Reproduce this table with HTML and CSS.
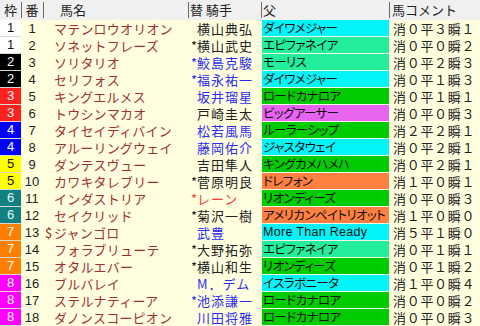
FILE: index.html
```html
<!DOCTYPE html>
<html lang="ja">
<head>
<meta charset="utf-8">
<title>出馬表</title>
<link rel="stylesheet" href="styles.css">
</head>
<body>
<div class="table">
  <div class="row head">
    <div class="h h-waku">枠</div>
    <div class="h h-ban sep">番</div>
    <div class="h h-name sep">馬名</div>
    <div class="h h-jockey sep">替 騎手</div>
    <div class="h h-sire sep">父</div>
    <div class="h h-comment sep">馬コメント</div>
  </div>

  <div class="row"><div class="waku w1">1</div><div class="ban">1</div><div class="name"><span class="mk"></span>マテンロウオリオン</div><div class="jockey"><span class="mk"></span>横山典弘</div><div class="sire s-cyan">ダイワメジャー</div><div class="comment">消０平３瞬１</div></div>
  <div class="row"><div class="waku w1">1</div><div class="ban">2</div><div class="name"><span class="mk"></span>ソネットフレーズ</div><div class="jockey"><span class="mk">*</span>横山武史</div><div class="sire s-aqua">エピファネイア</div><div class="comment">消０平０瞬２</div></div>
  <div class="row"><div class="waku w2">2</div><div class="ban">3</div><div class="name"><span class="mk"></span>ソリタリオ</div><div class="jockey blue"><span class="mk">*</span>鮫島克駿</div><div class="sire s-aqua">モーリス</div><div class="comment">消０平２瞬３</div></div>
  <div class="row"><div class="waku w2">2</div><div class="ban">4</div><div class="name"><span class="mk"></span>セリフォス</div><div class="jockey blue"><span class="mk">*</span>福永祐一</div><div class="sire s-cyan">ダイワメジャー</div><div class="comment">消０平１瞬３</div></div>
  <div class="row"><div class="waku w3">3</div><div class="ban">5</div><div class="name"><span class="mk"></span>キングエルメス</div><div class="jockey blue"><span class="mk"></span>坂井瑠星</div><div class="sire s-green">ロードカナロア</div><div class="comment">消０平１瞬１</div></div>
  <div class="row"><div class="waku w3">3</div><div class="ban">6</div><div class="name"><span class="mk"></span>トウシンマカオ</div><div class="jockey"><span class="mk"></span>戸崎圭太</div><div class="sire s-violet">ビッグアーサー</div><div class="comment">消０平０瞬３</div></div>
  <div class="row"><div class="waku w4">4</div><div class="ban">7</div><div class="name"><span class="mk"></span>タイセイディバイン</div><div class="jockey blue"><span class="mk"></span>松若風馬</div><div class="sire s-green">ルーラーシップ</div><div class="comment">消２平２瞬１</div></div>
  <div class="row"><div class="waku w4">4</div><div class="ban">8</div><div class="name"><span class="mk"></span>アルーリングウェイ</div><div class="jockey blue"><span class="mk"></span>藤岡佑介</div><div class="sire s-cyan">ジャスタウェイ</div><div class="comment">消０平２瞬１</div></div>
  <div class="row"><div class="waku w5">5</div><div class="ban">9</div><div class="name"><span class="mk"></span>ダンテスヴュー</div><div class="jockey"><span class="mk"></span>吉田隼人</div><div class="sire s-green">キングカメハメハ</div><div class="comment">消０平２瞬１</div></div>
  <div class="row"><div class="waku w5">5</div><div class="ban">10</div><div class="name"><span class="mk"></span>カワキタレブリー</div><div class="jockey"><span class="mk">*</span>菅原明良</div><div class="sire s-orange">ドレフォン</div><div class="comment">消１平０瞬１</div></div>
  <div class="row"><div class="waku w6">6</div><div class="ban">11</div><div class="name"><span class="mk"></span>インダストリア</div><div class="jockey red"><span class="mk">*</span>レーン</div><div class="sire s-green">リオンディーズ</div><div class="comment">消０平０瞬３</div></div>
  <div class="row"><div class="waku w6">6</div><div class="ban">12</div><div class="name"><span class="mk"></span>セイクリッド</div><div class="jockey"><span class="mk">*</span>菊沢一樹</div><div class="sire s-orange">アメリカンペイトリオット</div><div class="comment">消１平０瞬０</div></div>
  <div class="row"><div class="waku w7">7</div><div class="ban">13</div><div class="name"><span class="mk">$</span>ジャンゴロ</div><div class="jockey blue"><span class="mk"></span>武豊</div><div class="sire s-cyan latin">More Than Ready</div><div class="comment">消５平１瞬０</div></div>
  <div class="row"><div class="waku w7">7</div><div class="ban">14</div><div class="name"><span class="mk"></span>フォラブリューテ</div><div class="jockey"><span class="mk">*</span>大野拓弥</div><div class="sire s-aqua">エピファネイア</div><div class="comment">消０平１瞬１</div></div>
  <div class="row"><div class="waku w7">7</div><div class="ban">15</div><div class="name"><span class="mk"></span>オタルエバー</div><div class="jockey"><span class="mk">*</span>横山和生</div><div class="sire s-green">リオンディーズ</div><div class="comment">消０平１瞬２</div></div>
  <div class="row"><div class="waku w8">8</div><div class="ban">16</div><div class="name"><span class="mk"></span>ブルバレイ</div><div class="jockey blue"><span class="mk"></span>M．デム</div><div class="sire s-cyan">イスラボニータ</div><div class="comment">消１平０瞬４</div></div>
  <div class="row"><div class="waku w8">8</div><div class="ban">17</div><div class="name"><span class="mk"></span>ステルナティーア</div><div class="jockey blue"><span class="mk">*</span>池添謙一</div><div class="sire s-green">ロードカナロア</div><div class="comment">消０平０瞬２</div></div>
  <div class="row"><div class="waku w8">8</div><div class="ban">18</div><div class="name"><span class="mk"></span>ダノンスコーピオン</div><div class="jockey blue"><span class="mk"></span>川田将雅</div><div class="sire s-green">ロードカナロア</div><div class="comment">消０平０瞬３</div></div>
</div>
</body>
</html>
```

FILE: styles.css
```css
html, body {
  margin: 0;
  padding: 0;
  background: #ffffe0;
}
body {
  width: 480px;
  height: 326px;
  overflow: hidden;
  font-family: "Noto Sans CJK JP", "Noto Sans", sans-serif;
  font-size: 13px;
  color: #222;
}
.table {
  display: flex;
  flex-direction: column;
}
.row {
  display: grid;
  grid-template-columns: 21px 22px 145px 73px 128px 91px;
  height: 17px;
  line-height: 17px;
  white-space: nowrap;
}
.row > div {
  overflow: hidden;
}
.head {
  height: 20px;
  line-height: 20px;
  background: #f0f0f0;
  color: #222;
}
.h {
  font-size: 13px;
}
.sep {
  background: linear-gradient(#6a6a6a, #6a6a6a) 0 2px / 1px 16px no-repeat;
}
.h-waku, .h-ban { text-align: center; }
.h-name { padding-left: 17px; }
.h-jockey { padding-left: 2px; }
.h-sire { padding-left: 2px; }
.h-comment { padding-left: 3px; }

.waku {
  text-align: center;
  font-family: "Liberation Sans", "Noto Sans", sans-serif;
  font-size: 13px;
  border-bottom: 1px solid #d8d8d0;
  line-height: 16px;
}
.w1 { background: #ffffff; color: #111; }
.w2 { background: #000000; color: #fff; }
.w3 { background: #ff2020; color: #fff; }
.w4 { background: #0000ff; color: #fff; }
.w5 { background: #ffff00; color: #111; }
.w6 { background: #108080; color: #e8f4f4; }
.w7 { background: #ff8000; color: #fff; }
.w8 { background: #ff00ff; color: #fff; }

.ban {
  text-align: center;
  font-family: "Liberation Sans", "Noto Sans", sans-serif;
  font-size: 13px;
  color: #222;
}
.name {
  padding-left: 2px;
  color: #a03030;
  letter-spacing: 0.2px;
}
.mk {
  display: inline-block;
  width: 9px;
  letter-spacing: 0;
}
.jockey {
  padding-left: 1px;
  color: #222;
  letter-spacing: 1px;
}
.jockey .mk {
  width: 8px;
  text-align: right;
}
.jockey.blue { color: #2c2cf0; }
.jockey.red { color: #ff3838; }

.sire {
  margin-left: 1px;
  padding-left: 1px;
  color: #111;
  font-size: 12.5px;
  font-feature-settings: "palt";
  letter-spacing: -0.6px;
  border-bottom: 1px solid #f4f4e4;
  line-height: 16px;
}
.sire.latin {
  font-family: "Liberation Sans", "Noto Sans", sans-serif;
  font-size: 12.5px;
  letter-spacing: 0.3px;
}
.s-cyan { background: #00f4f8; }
.s-aqua { background: #22ee9c; }
.s-green { background: #00cc00; }
.s-violet { background: #e864f0; }
.s-orange { background: #ff8040; }

.comment {
  padding-left: 4px;
  color: #222;
  letter-spacing: 0.7px;
}
```
